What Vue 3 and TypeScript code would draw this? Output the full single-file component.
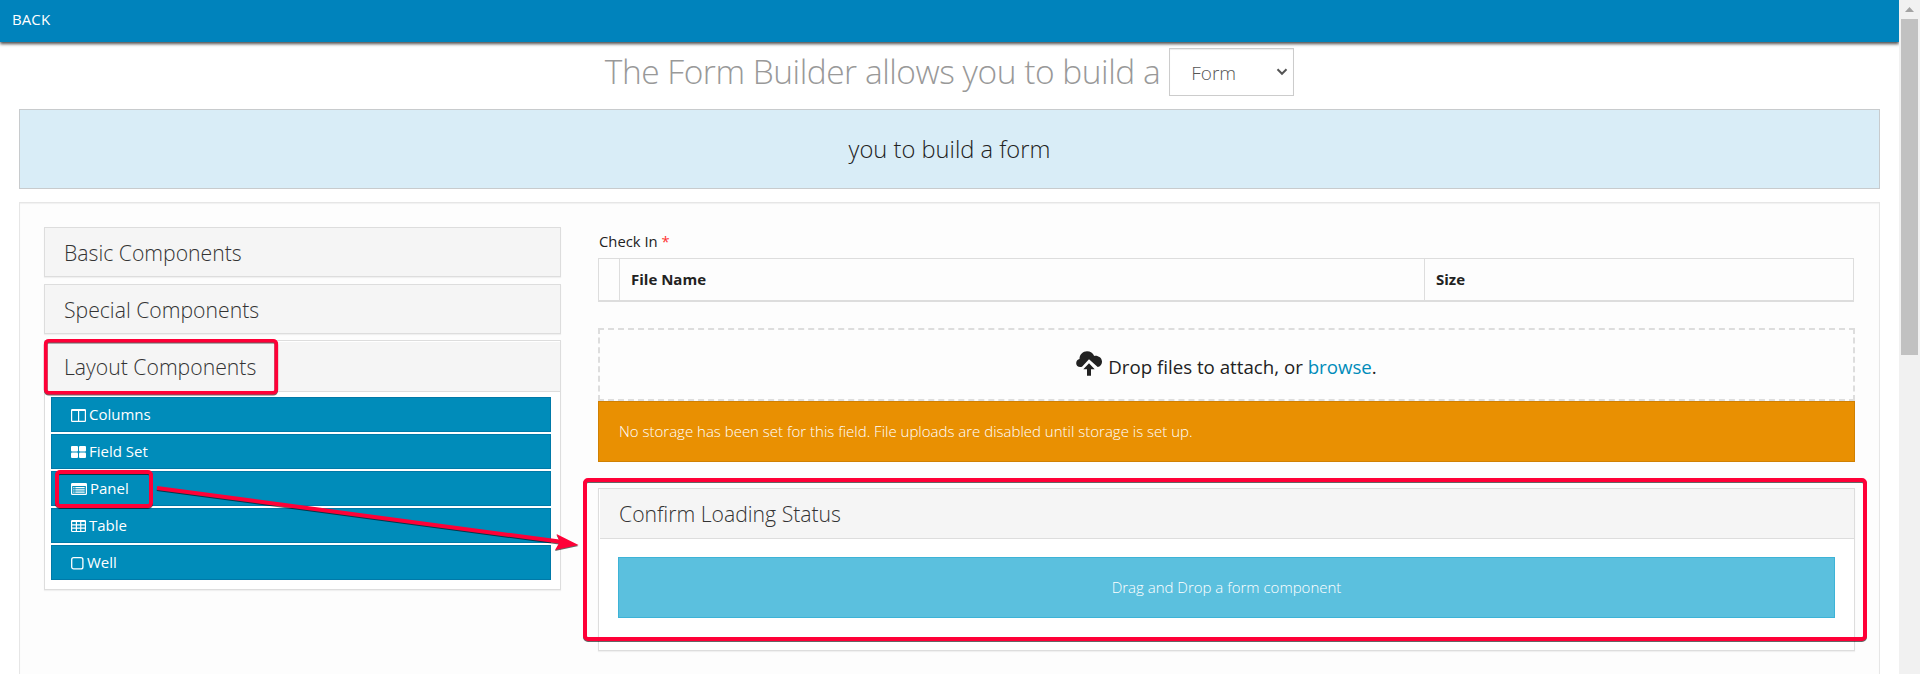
<script setup lang="ts">
type IconName = 'columns' | 'fieldset' | 'panel' | 'table' | 'well'

interface LayoutItem {
  label: string
  icon: IconName
  width: number
}

const closedGroups: string[] = ['Basic Components', 'Special Components']

const layoutItems: LayoutItem[] = [
  { label: 'Columns', icon: 'columns', width: 15 },
  { label: 'Field Set', icon: 'fieldset', width: 15 },
  { label: 'Panel', icon: 'panel', width: 16 },
  { label: 'Table', icon: 'table', width: 15 },
  { label: 'Well', icon: 'well', width: 13 },
]
</script>

<template>
  <div class="screen">
    <div class="page">
      <header class="topbar"><a class="back">BACK</a></header>

      <main class="content">
        <h2 class="title">
          <span class="title-text">The Form Builder allows you to build a</span>
          <span class="select">
            <span class="select-value">Form</span>
            <svg class="chevron" width="12" height="8" viewBox="0 0 12 8"><path d="M1.5 1.2 6 5.8 10.5 1.2" fill="none" stroke="#555" stroke-width="2" /></svg>
          </span>
        </h2>

        <div class="intro"><span>you to build a form</span></div>

        <section class="well">
          <aside class="sidebar">
            <div v-for="g in closedGroups" :key="g" class="group">
              <div class="group-head">{{ g }}</div>
            </div>
            <div class="group open">
              <div class="group-head">Layout Components</div>
              <div class="group-body">
                <button v-for="item in layoutItems" :key="item.label" class="item">
                  <svg class="icon" :width="item.width" height="14" :viewBox="`0 0 ${item.width} 14`">
                    <path v-if="item.icon === 'columns'" fill-rule="evenodd" d="M1.2 1h12.6a1.2 1.2 0 0 1 1.2 1.2v10.6a1.2 1.2 0 0 1-1.2 1.2H1.2A1.2 1.2 0 0 1 0 12.800V2.200A1.200 1.200 0 0 1 1.200 1zM1.200 3v9.800H7V3zM8.200 3v9.800h5.600V3z" />
                    <g v-else-if="item.icon === 'fieldset'">
                      <rect x="0" y="1" width="7" height="5.500" rx="1" />
                      <rect x="8" y="1" width="7" height="5.500" rx="1" />
                      <rect x="0" y="7.500" width="7" height="5.500" rx="1" />
                      <rect x="8" y="7.500" width="7" height="5.500" rx="1" />
                    </g>
                    <g v-else-if="item.icon === 'panel'">
                      <path fill-rule="evenodd" d="M1.300 1h13.400A1.300 1.300 0 0 1 16 2.300v9.400a1.300 1.300 0 0 1-1.300 1.300H1.300A1.300 1.300 0 0 1 0 11.700V2.300A1.300 1.300 0 0 1 1.300 1zM1.200 4v7.800h13.600V4z" />
                      <path d="M2.300 5h1.200v1.200H2.300zM4.300 5h9.400v1.200H4.300zM2.300 7.200h1.200v1.200H2.300zM4.300 7.200h9.400v1.200H4.300zM2.300 9.500h1.200v1.200H2.300zM4.300 9.500h9.400v1.200H4.300z" />
                    </g>
                    <path v-else-if="item.icon === 'table'" fill-rule="evenodd" d="M1.200 1h12.600A1.200 1.200 0 0 1 15 2.200v9.600a1.200 1.200 0 0 1-1.200 1.200H1.200A1.200 1.200 0 0 1 0 11.800V2.200A1.200 1.200 0 0 1 1.200 1zM1.200 3v2.200H4.800V3zM6 3v2.200h3.200V3zM10.300 3v2.200h3.500V3zM1.200 6.400v2.200H4.800V6.400zM6 6.400v2.200h3.200V6.400zM10.300 6.400v2.200h3.500V6.400zM1.200 9.700v2.200H4.800V9.700zM6 9.700v2.200h3.200V9.700zM10.300 9.700v2.200h3.500V9.700z" />
                    <rect v-else x="0.700" y="1.700" width="11.200" height="11.200" rx="2" fill="none" stroke="#fff" stroke-width="1.300" />
                  </svg>
                  <span class="item-label">{{ item.label }}</span>
                </button>
              </div>
            </div>
          </aside>

          <div class="canvas">
            <div class="field-label">Check In <span class="required">*</span></div>
            <div class="file-table">
              <div class="cell"></div>
              <div class="cell">File Name</div>
              <div class="cell">Size</div>
            </div>
            <div class="dropzone">
              <svg class="cloud" width="26" height="25" viewBox="0 0 26 25">
                <path d="M6 15.800C2.500 17 0 14.500.2 12 .3 9.800 1.800 8.300 3.500 8 3.500 3.500 7 .3 11 .3c3.400 0 6 1.800 7.200 4.600 3.800-.6 7.600 1.700 7.800 5.600.1 2.800-1.700 5-4.300 5.500L13 8.300z" />
                <path d="M13 12.200 18.700 18.300H15V24.800H11V18.300H7.300z" />
              </svg>
              <span class="drop-text">Drop files to attach, or <a class="browse">browse</a>.</span>
            </div>
            <div class="warning"><span>No storage has been set for this field. File uploads are disabled until storage is set up.</span></div>
            <div class="form-panel">
              <div class="form-panel-head">Confirm Loading Status</div>
              <div class="form-panel-body">
                <div class="drag-hint"><span>Drag and Drop a form component</span></div>
              </div>
            </div>
          </div>
        </section>
      </main>
    </div>

    <div class="scrollbar">
      <svg class="scroll-up" width="9" height="5" viewBox="0 0 9 5"><path d="M4.500 0 9 5H0z" fill="#a3a3a3" /></svg>
      <div class="thumb"></div>
    </div>

    <svg class="annotations" width="1920" height="674" viewBox="0 0 1920 674">
      <g class="marks">
        <rect x="45.750" y="340.750" width="230.500" height="52" rx="3" stroke-width="3.700" />
        <rect x="57" y="472" width="94" height="34" rx="3" stroke-width="4" />
        <rect x="585" y="480" width="1280" height="159" rx="3" stroke-width="4" />
        <path d="M157 488 561 541.800" stroke-width="4" />
        <path class="arrowhead" d="M578.500 545 556.500 534 560 541.500 555 550z" />
      </g>
    </svg>
  </div>
</template>

<style>
body {
  margin: 0;
  overflow: hidden;
}
</style>

<style scoped>
.screen {
  position: relative;
  display: flex;
  width: 1920px;
  height: 674px;
  overflow: hidden;
  background: #fff;
  color: #222;
  font-family: "Open Sans", "Noto Sans", sans-serif;
  font-size: 15px;
}
.screen * {
  box-sizing: border-box;
}
.page {
  width: 1899px;
  height: 674px;
  overflow: hidden;
}
.topbar {
  height: 42px;
  padding: 0 12px;
  background: #0083bc;
  box-shadow: 0 2px 3px rgba(0, 0, 0, 0.7);
  color: #fff;
  line-height: 38px;
}
.back {
  font-size: 15px;
  letter-spacing: 0.1px;
}
.content {
  padding: 6px 19px 0;
}
.title {
  display: flex;
  justify-content: center;
  gap: 9px;
  height: 48px;
  margin: 0 0 13px;
  color: #999;
  font-size: 33.500px;
  font-weight: 300;
  line-height: 46px;
  white-space: nowrap;
}
.title-text {
  letter-spacing: -0.48px;
}
.select {
  display: flex;
  align-items: center;
  justify-content: space-between;
  width: 125px;
  height: 48px;
  padding: 0 5px 0 21px;
  border: 1px solid #ccc;
  background: #fff;
  color: #555;
  box-shadow: inset 0 1px 1px rgba(0, 0, 0, 0.075);
  font-size: 19px;
}
.select-value {
  padding-top: 2px;
}
.intro {
  display: flex;
  align-items: center;
  justify-content: center;
  height: 80px;
  border: 1px solid #c8cbcd;
  background: #d9edf7;
  font-size: 23.700px;
  font-weight: 300;
}
.well {
  display: flex;
  gap: 37px;
  height: 560px;
  margin-top: 13px;
  padding: 24px;
  border: 1px solid #e6e6e6;
  background: #fdfdfd;
  box-shadow: inset 0 1px 1px rgba(0, 0, 0, 0.05);
}
.sidebar {
  width: 517px;
}
.group {
  margin-bottom: 7px;
  border: 1px solid #ddd;
  background: #fff;
  box-shadow: 0 1px 1px rgba(0, 0, 0, 0.05);
}
.group-head,
.form-panel-head {
  height: 48px;
  background: #f5f5f5;
  color: #333;
  font-size: 21.200px;
  font-weight: 300;
  line-height: 49px;
}
.group-head {
  padding-left: 19px;
}
.group.open {
  margin-top: -1px;
  padding-top: 1px;
}
.open .group-head {
  height: 50px;
  border-bottom: 1px solid #ddd;
}
.group-body {
  display: flex;
  flex-direction: column;
  gap: 2px;
  padding: 5px 9px 9px 6px;
}
.item {
  display: flex;
  align-items: center;
  gap: 3px;
  height: 35px;
  padding: 0 19px;
  border: 1px solid #0079a8;
  background: #008cba;
  color: #fff;
  font: 15px "Open Sans", "Noto Sans", sans-serif;
}
.item-label {
  padding-bottom: 2px;
}
.icon {
  fill: #fff;
}
.canvas {
  width: 1257px;
}
.field-label {
  height: 31px;
  padding-left: 1px;
  line-height: 28px;
  font-size: 14.800px;
}
.required {
  color: #f33;
}
.file-table {
  display: grid;
  grid-template-columns: 21px 805px 430px;
  width: 1256px;
  height: 44px;
  border: 1px solid #ddd;
  border-width: 1px 0 2px 0;
}
.cell {
  padding-left: 11px;
  border-left: 1px solid #ddd;
  font-size: 15px;
  font-weight: 700;
  line-height: 40px;
}
.cell:last-child {
  border-right: 1px solid #ddd;
}
.dropzone {
  display: flex;
  align-items: center;
  justify-content: center;
  gap: 6px;
  height: 73px;
  margin-top: 26px;
  border: 2px dashed #ddd;
  font-size: 18.700px;
}
.cloud {
  fill: #222;
  margin-top: -2px;
}
.drop-text {
  padding-top: 3px;
}
.browse {
  color: #008cba;
}
.warning {
  display: flex;
  align-items: center;
  height: 61px;
  padding: 0 0 2px 20px;
  border: 1px solid #d08002;
  background: #e99002;
  color: #fff;
  font-size: 15px;
  font-weight: 300;
}
.form-panel {
  height: 163px;
  margin-top: 26px;
  border: 1px solid #ddd;
  background: #fff;
  box-shadow: 0 1px 1px rgba(0, 0, 0, 0.05);
}
.form-panel-head {
  height: 50px;
  margin-left: 1px;
  padding-left: 19px;
  border-bottom: 1px solid #ddd;
}
.form-panel-body {
  padding: 18px 19px;
}
.drag-hint {
  display: flex;
  align-items: center;
  justify-content: center;
  height: 61px;
  padding-bottom: 2px;
  border: 1px solid #3db3d7;
  background: #5bc0de;
  color: #fff;
  font-size: 15px;
  font-weight: 300;
}
.scrollbar {
  display: flex;
  flex-direction: column;
  align-items: flex-start;
  width: 21px;
  background: #f1f1f1;
}
.scroll-up {
  margin: 7px 0 7px 6px;
}
.thumb {
  width: 17px;
  height: 336px;
  margin-left: 2px;
  background: #c1c1c1;
}
.annotations {
  position: absolute;
  top: 0;
  left: 0;
  pointer-events: none;
}
.marks {
  fill: none;
  stroke: #ff0037;
  filter: drop-shadow(0 1px 0.5px rgba(0, 0, 0, 0.6));
}
.arrowhead {
  fill: #ff0037;
  stroke: none;
}
</style>
